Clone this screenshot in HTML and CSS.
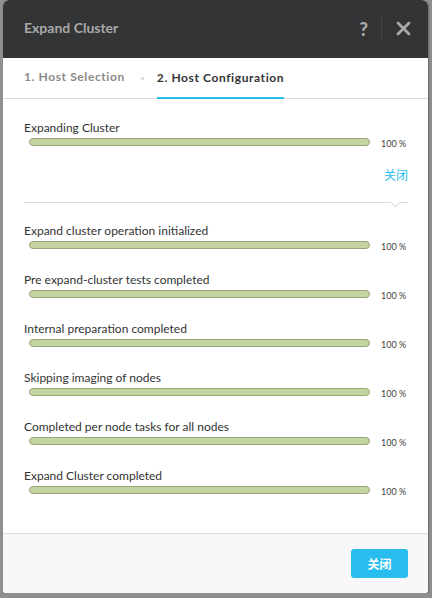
FILE: index.html
```html
<!DOCTYPE html>
<html>
<head>
<meta charset="utf-8">
<link rel="stylesheet" href="styles.css">
</head>
<body>
<div class="dialog">
  <div class="header">
    <div class="title">Expand Cluster</div>
    <div class="tools">
      <span class="help">?</span>
      <span class="divider"></span>
      <svg class="close" width="15" height="15" viewBox="0 0 15 15"><path d="M2 2 L13 13 M13 2 L2 13" stroke="#a9a9a9" stroke-width="2.8" stroke-linecap="round"/></svg>
    </div>
  </div>
  <div class="tabs">
    <div class="tab">1. Host Selection</div>
    <span class="dot"></span>
    <div class="tab active">2. Host Configuration</div>
  </div>
  <div class="content">
    <div class="item">
      <div class="label">Expanding Cluster</div>
      <div class="barrow"><div class="bar"></div><span class="pct">100 %</span></div>
    </div>
    <div class="linkrow"><a class="link">关闭</a></div>
    <div class="sep"><span class="notch"></span></div>
    <div class="list">
      <div class="item">
        <div class="label">Expand cluster operation initialized</div>
        <div class="barrow"><div class="bar"></div><span class="pct">100 %</span></div>
      </div>
      <div class="item">
        <div class="label">Pre expand-cluster tests completed</div>
        <div class="barrow"><div class="bar"></div><span class="pct">100 %</span></div>
      </div>
      <div class="item">
        <div class="label">Internal preparation completed</div>
        <div class="barrow"><div class="bar"></div><span class="pct">100 %</span></div>
      </div>
      <div class="item">
        <div class="label">Skipping imaging of nodes</div>
        <div class="barrow"><div class="bar"></div><span class="pct">100 %</span></div>
      </div>
      <div class="item">
        <div class="label">Completed per node tasks for all nodes</div>
        <div class="barrow"><div class="bar"></div><span class="pct">100 %</span></div>
      </div>
      <div class="item">
        <div class="label">Expand Cluster completed</div>
        <div class="barrow"><div class="bar"></div><span class="pct">100 %</span></div>
      </div>
    </div>
  </div>
  <div class="footer">
    <button class="btn">关闭</button>
  </div>
</div>
</body>
</html>
```
FILE: styles.css
```css
html, body {
  margin: 0;
  padding: 0;
  background: #8f8f8f;
  font-family: Lato, "Noto Sans CJK SC", sans-serif;
}
.dialog {
  margin-left: 3px;
  width: 425px;
  height: 593px;
  background: #fff;
  border-radius: 6px 6px 3px 3px;
  overflow: hidden;
  display: flex;
  flex-direction: column;
  box-shadow: 1px 1px 2px rgba(0,0,0,0.25);
}
.header {
  height: 58px;
  flex: none;
  background: #333435;
  display: flex;
  align-items: center;
  justify-content: space-between;
  padding: 0 17px 0 21px;
}
.title {
  color: #a8a8a8;
  font-weight: bold;
  font-size: 14px;
  margin-top: -3px;
}
.tools {
  display: flex;
  align-items: center;
}
.help {
  color: #a9a9a9;
  font-weight: 900;
  font-size: 19px;
  margin-right: 13px;
  margin-top: -2px;
}
.divider {
  width: 1px;
  height: 22px;
  background: #444546;
  margin-right: 14px;
  margin-top: -2px;
}
.close {
  display: block;
  margin-top: -1px;
}
.tabs {
  flex: none;
  border-bottom: 1px solid #dcdcdc;
  display: flex;
  align-items: stretch;
  padding-left: 21px;
  box-sizing: border-box;
  height: 41px;
}
.tab {
  font-size: 12px;
  font-weight: bold;
  color: #8a8a8a;
  letter-spacing: 0.6px;
  display: flex;
  align-items: center;
  padding-bottom: 3px;
  box-sizing: border-box;
}
.tab.active {
  color: #333;
  border-bottom: 2px solid #27bdef;
  margin-bottom: -1px;
  padding-bottom: 0;
}
.dot {
  width: 3px;
  height: 3px;
  background: #dedede;
  align-self: center;
  margin: 0 13px 0 16px;
}
.content {
  flex: 1;
  padding: 21px 20px 0 21px;
}
.label {
  font-size: 12px;
  color: #333;
  line-height: 16px;
}
.barrow {
  display: flex;
  align-items: center;
  height: 8px;
  padding-left: 5px;
  margin-top: 2px;
}
.bar {
  flex: 1;
  height: 6px;
  background: #c5d5a1;
  border: 1px solid #98a779;
  border-radius: 5px;
}
.pct {
  font-size: 9px;
  line-height: 8px;
  color: #444;
  width: 27px;
  margin-left: 11px;
  margin-top: 3px;
  white-space: nowrap;
}
.linkrow {
  display: flex;
  justify-content: flex-end;
  margin-top: 22px;
}
.link {
  color: #27bdef;
  font-size: 12px;
  line-height: 16px;
}
.sep {
  position: relative;
  border-top: 1px solid #dcdcdc;
  margin-top: 18px;
  height: 0;
}
.notch {
  position: absolute;
  right: 9px;
  top: -4px;
  width: 6px;
  height: 6px;
  background: #fff;
  border-right: 1px solid #dcdcdc;
  border-bottom: 1px solid #dcdcdc;
  transform: rotate(45deg);
}
.list {
  padding-top: 20px;
}
.list .item {
  margin-bottom: 23px;
}
.footer {
  flex: none;
  height: 60px;
  box-sizing: border-box;
  background: #f8f8f8;
  border-top: 1px solid #dcdcdc;
  display: flex;
  justify-content: flex-end;
  align-items: flex-start;
  padding: 15px 20px 0 0;
}
.btn {
  width: 57px;
  height: 29px;
  border: none;
  border-radius: 3px;
  background: #27bdef;
  color: #fff;
  font-weight: bold;
  font-size: 12px;
  font-family: "Noto Sans CJK SC", sans-serif;
  padding: 0;
}
```
